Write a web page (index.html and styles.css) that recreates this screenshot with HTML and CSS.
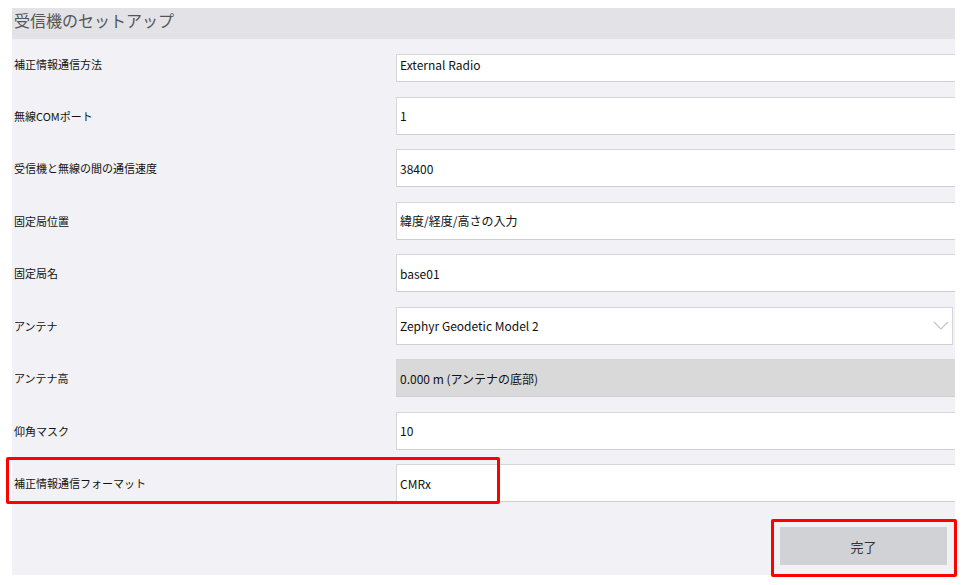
FILE: index.html
```html
<!DOCTYPE html>
<html lang="ja">
<head>
    <meta charset="UTF-8">
    <meta name="viewport" content="width=device-width, initial-scale=1.0">
    <title>受信機のセットアップ</title>
    <link rel="stylesheet" href="styles.css">
</head>
<body>

    <div class="panel">
        <div class="panel-header">受信機のセットアップ</div>

        <div class="form">
            <div class="row row-short">
                <label>補正情報通信方法</label>
                <div class="field">External Radio</div>
            </div>
            <div class="row">
                <label>無線COMポート</label>
                <div class="field">1</div>
            </div>
            <div class="row">
                <label>受信機と無線の間の通信速度</label>
                <div class="field">38400</div>
            </div>
            <div class="row">
                <label>固定局位置</label>
                <div class="field">緯度/経度/高さの入力</div>
            </div>
            <div class="row">
                <label>固定局名</label>
                <div class="field">base01</div>
            </div>
            <div class="row">
                <label>アンテナ</label>
                <div class="field field-select">
                    Zephyr Geodetic Model 2
                    <svg class="chevron" width="16" height="9" viewBox="0 0 16 9">
                        <path d="M1 1 L8 8 L15 1" fill="none" stroke="#c4c4c8" stroke-width="1.2"/>
                    </svg>
                </div>
            </div>
            <div class="row">
                <label>アンテナ高</label>
                <div class="field field-disabled">0.000 m (アンテナの底部)</div>
            </div>
            <div class="row">
                <label>仰角マスク</label>
                <div class="field">10</div>
            </div>
            <div class="row">
                <label>補正情報通信フォーマット</label>
                <div class="field">CMRx</div>
            </div>
        </div>

        <div class="actions">
            <button class="btn-done">完了</button>
        </div>
    </div>

    <!-- annotation boxes -->
    <div class="mark mark-format"></div>
    <div class="mark mark-done"></div>

</body>
</html>
```

FILE: styles.css
```css
body {
    font-family: "Noto Sans CJK JP", "Noto Sans", sans-serif;
    background-color: #ffffff;
    margin: 0;
    color: #222;
}

/* Panel */
.panel {
    margin: 8px 0 0 12px;
    width: 943px;
    background-color: #f2f2f6;
    padding-bottom: 10px;
}

.panel-header {
    height: 31px;
    line-height: 25px;
    background-color: #e3e3e7;
    color: #555;
    font-size: 16px;
    padding-left: 2px;
}

/* Form rows */
.form {
    display: flex;
    flex-direction: column;
    gap: 14.5px;
    padding-top: 15px;
}

.row {
    display: flex;
    align-items: center;
    height: 38px;
}

.row label {
    width: 382px;
    padding-left: 2px;
    font-size: 11px;
    color: #111;
}

.field {
    flex: 1;
    height: 100%;
    box-sizing: border-box;
    background: white;
    border: 1px solid #d6d6da;
    border-right: none;
    border-bottom-color: #cfcfd3;
    display: flex;
    align-items: center;
    padding-left: 3px;
    font-size: 12px;
    color: #111;
}

/* first row sits a little high in its box */
.row-short {
    height: 28px;
    align-items: flex-start;
}

.row-short label {
    line-height: 16px;
    padding-top: 2px;
}

.row-short .field {
    align-items: flex-start;
    line-height: 18px;
    padding-top: 1px;
}

.field-select {
    border-right: 1px solid #d6d6da;
    margin-right: 2px;
    justify-content: space-between;
    padding-right: 3px;
}

.field-disabled {
    background-color: #d9d9d9;
}

/* Done button */
.actions {
    display: flex;
    justify-content: flex-end;
    padding: 25px 8px 0 0;
}

.btn-done {
    width: 167px;
    height: 38px;
    border: none;
    background-color: #d1d2d6;
    color: #333;
    font-family: inherit;
    font-size: 13px;
    cursor: pointer;
}

/* Red highlight boxes */
.mark {
    position: absolute;
    border: 3.5px solid #ff0000;
    border-radius: 2px;
    box-sizing: border-box;
}

.mark-format {
    left: 6px;
    top: 457px;
    width: 494px;
    height: 47px;
}

.mark-done {
    left: 771px;
    top: 519px;
    width: 186px;
    height: 58px;
}
```
